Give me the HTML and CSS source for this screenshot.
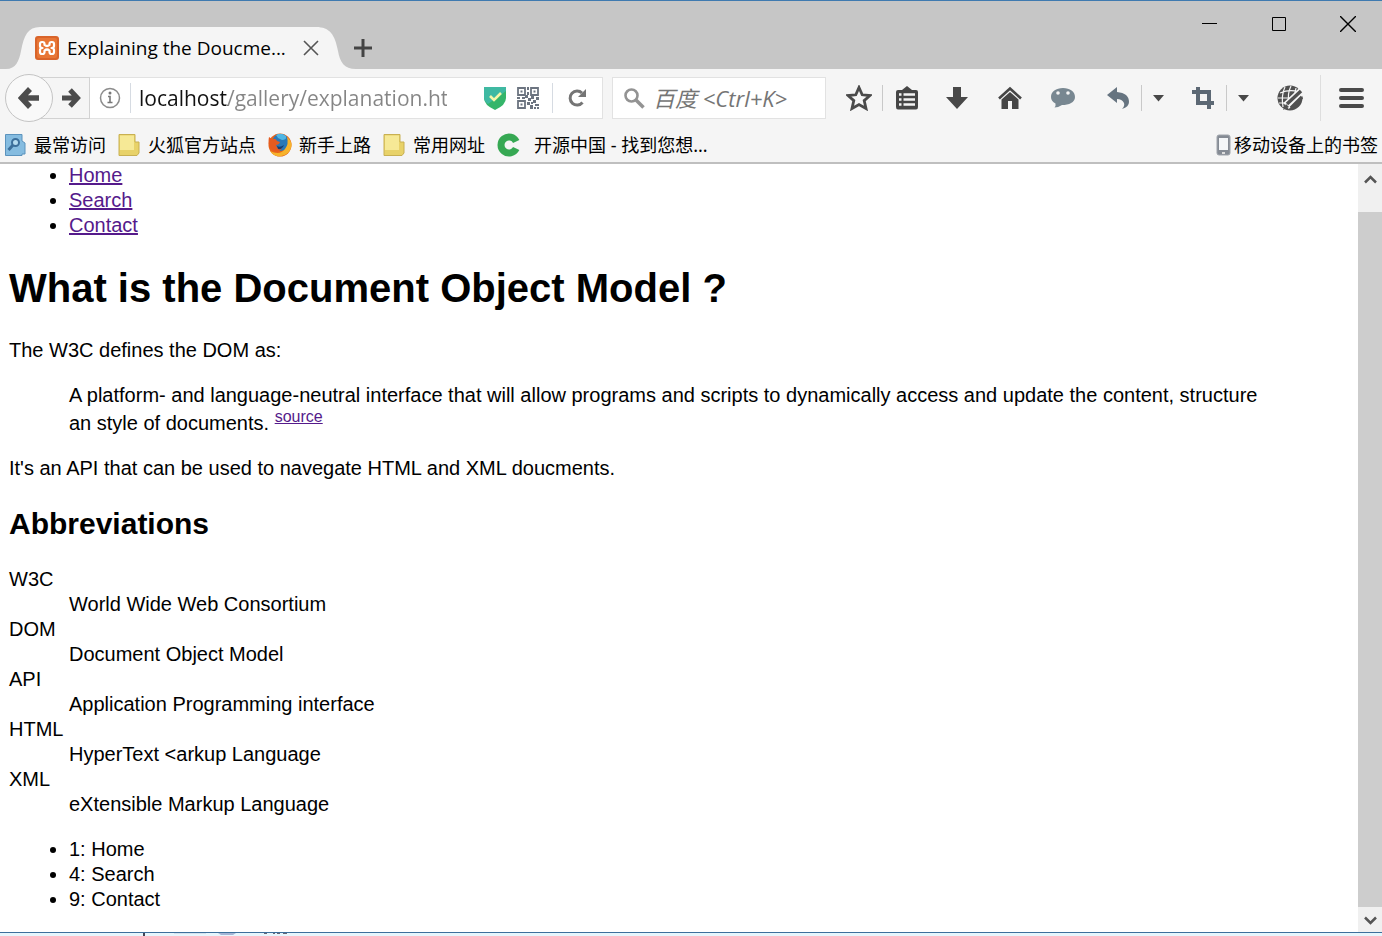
FILE: index.html
```
<!DOCTYPE html>
<html lang="en">
<head>
    <meta charset="UTF-8">
    <meta name="viewport" content="width=device-width, initial-scale=1.0">
    <title>Explaining the Document Object Model</title>
    <link rel="stylesheet" href="styles.css">
</head>
<body>
    <header class="titlebar">
        <div class="tab">
            <svg class="tab-shape" width="360" height="42" viewBox="0 0 360 42"><path d="M0 42H6C16 42 19 34 21 24C24 8 28 0 40 0H316C330 0 335 8 338 24C340 35 344 42 356 42H360Z" fill="#f5f5f5"/></svg>
            <svg class="tab-icon" width="24" height="24" viewBox="0 0 24 24">
                <rect width="24" height="24" rx="3" fill="#d9642a"/>
                <rect x="2" y="2" width="20" height="20" rx="2" fill="#e87636"/>
                <path d="M9.500 9V8Q9.500 6 7.500 6H7Q5 6 5 8V10Q5 12 7.500 12Q5 12 5 14V16Q5 18 7 18H7.500Q9.500 18 9.500 16V14.500Q12 12.500 14.500 14.500V16Q14.500 18 16.500 18H17Q19 18 19 16V14Q19 12 16.500 12Q19 12 19 10V8Q19 6 17 6H16.500Q14.500 6 14.500 8V9Q12 11 9.500 9Z" fill="none" stroke="#fff" stroke-width="2.200" stroke-linejoin="round"/>
            </svg>
            <span class="tab-title">Explaining the Doucme...</span>
            <button class="tab-close" aria-label="Close tab"><svg width="18" height="18" viewBox="0 0 18 18"><path d="M2 2L16 16M16 2L2 16" stroke="#555" stroke-width="1.600"/></svg></button>
        </div>
        <button class="new-tab" aria-label="New tab"><svg width="18" height="18" viewBox="0 0 18 18"><path d="M9 0V18M0 9H18" stroke="#444" stroke-width="3"/></svg></button>
        <div class="window-buttons">
            <button aria-label="Minimize"><svg width="16" height="16" viewBox="0 0 16 16"><path d="M0 7.500H15" stroke="#000"/></svg></button>
            <button aria-label="Maximize"><svg width="16" height="16" viewBox="0 0 16 16"><path d="M1.500 1.500H14.500V14.500H1.500Z" fill="none" stroke="#000"/></svg></button>
            <button aria-label="Close"><svg width="16" height="16" viewBox="0 0 16 16"><path d="M0 0L16 16M16 0L0 16" stroke="#000" stroke-width="1.400"/></svg></button>
        </div>
    </header>

    <nav class="toolbar">
        <button class="back" aria-label="Back"><svg width="22" height="24" viewBox="0 0 22 24"><path d="M12 3L3.500 12L12 21M4 12H21" fill="none" stroke="#4c4c4c" stroke-width="5.500"/></svg></button>
        <button class="forward" aria-label="Forward"><svg width="20" height="22" viewBox="0 0 20 22"><path d="M9 3L16.500 11L9 19M16 11H1" fill="none" stroke="#4c4c4c" stroke-width="5"/></svg></button>
        <div class="urlbar">
            <svg class="info" width="22" height="22" viewBox="0 0 22 22"><circle cx="11" cy="11" r="9.500" fill="none" stroke="#8c8c8c" stroke-width="1.500"/><circle cx="11" cy="6" r="1.500" fill="#777"/><path d="M9 9.500H11V15.500M8.500 15.500H13.500" fill="none" stroke="#777" stroke-width="1.600"/></svg>
            <span class="sep"></span>
            <input class="url" type="text" aria-label="Address" value="localhost/gallery/explanation.html">
            <svg width="22" height="24" viewBox="0 0 22 24"><path d="M0 1H22V12Q22 19 11 24Q0 19 0 12Z" fill="#35b56a"/><path d="M0 1H22V5L4 18Q0 15 0 12Z" fill="#3fb9a2"/><path d="M6 10L10 14L17 7" fill="none" stroke="#f7f7a8" stroke-width="2.600"/></svg>
            <svg width="22" height="22" viewBox="0 0 22 22">
                <path d="M1 1H8V8H1ZM14 1H21V8H14ZM1 14H8V21H1Z" fill="none" stroke="#6c7480" stroke-width="1.800"/>
                <path d="M3.500 3.500H5.500V5.500H3.500ZM16.500 3.500H18.500V5.500H16.500ZM3.500 16.500H5.500V18.500H3.500ZM10 0H12V3H10ZM10 5H12V8H10ZM0 10H3V12H0ZM5 10H8V12H5ZM8 8H11V11H8ZM11 11H14V14H11ZM14 9H17V12H14ZM19 10H22V13H19ZM16 13H19V16H16ZM10 15H13V18H10ZM13 18H16V22H13ZM14 15H16V17H14ZM18 17H22V19H18ZM17 20H19V22H17ZM20 20H22V22H20Z" fill="#6c7480"/>
            </svg>
            <span class="sep"></span>
            <button class="reload" aria-label="Reload"><svg width="20" height="20" viewBox="0 0 20 20"><path d="M14.500 14.500A7 7 0 1 1 14 5" fill="none" stroke="#757575" stroke-width="3"/><path d="M18 1V9H10Z" fill="#757575"/></svg></button>
        </div>
        <label class="search">
            <svg width="21" height="21" viewBox="0 0 21 21"><circle cx="7.500" cy="7.500" r="6" fill="none" stroke="#939393" stroke-width="2.600"/><path d="M12 12L19.500 19.500" stroke="#939393" stroke-width="3.500"/></svg>
            <input type="text" aria-label="Search" placeholder="百度 &lt;Ctrl+K&gt;">
        </label>
        <div class="tools">
            <button class="tool narrow" aria-label="Bookmark"><svg width="26" height="26" viewBox="0 0 26 26"><path d="M13 2.500L16.200 9.800L24 10.500L18.200 15.600L20 23.500L13 19.500L6 23.500L7.800 15.600L2 10.500L9.800 9.800Z" fill="none" stroke="#4a4a4a" stroke-width="2.800"/></svg></button>
            <span class="sep"></span>
            <button class="tool narrow" aria-label="Show bookmarks"><svg width="24" height="24" viewBox="0 0 24 24"><path d="M3 4H7L12 0L17 4H21Q23 4 23 6V21Q23 23.500 21 23.500H3Q1 23.500 1 21V6Q1 4 3 4Z" fill="#464646"/><path d="M4 8.500H6.500M8.500 8.500H20M4 13.500H6.500M8.500 13.500H20M4 18.500H6.500M8.500 18.500H20" stroke="#f5f5f5" stroke-width="2.600"/></svg></button>
            <button class="tool" aria-label="Downloads"><svg width="22" height="22" viewBox="0 0 22 22"><path d="M7 0H15V10H22L11 22L0 10H7Z" fill="#484848"/></svg></button>
            <button class="tool" aria-label="Home"><svg width="24" height="24" viewBox="0 0 24 24"><path d="M1 12.500L12 2.500L23 12.500" fill="none" stroke="#464646" stroke-width="2.600"/><path d="M3.500 13.500L12 6L20.500 13.500V23H14V15H10V23H3.500Z" fill="#464646"/></svg></button>
            <button class="tool" aria-label="Chat"><svg width="24" height="22" viewBox="0 0 24 22"><path d="M12 1C19 1 24 4.500 24 10S18 18 11 18Q7 20.500 3.500 20.500Q5 18.500 4.500 16.500Q0 14 0 10C0 4.500 5 1 12 1Z" fill="#788791"/><circle cx="7" cy="6" r="1.800" fill="#f5f5f5"/><circle cx="17" cy="6" r="1.800" fill="#f5f5f5"/></svg></button>
            <button class="tool split" aria-label="Undo"><svg width="22" height="22" viewBox="0 0 22 22"><path d="M0 8L10 0V5Q22 6 22 15Q22 20 15 22Q18 19 17 16Q15 12 10 12V16Z" fill="#667480"/></svg></button>
            <span class="sep"></span>
            <button class="caret" aria-label="Undo options"><svg width="11" height="7" viewBox="0 0 11 7"><path d="M0 0H11L5.500 6.500Z" fill="#484848"/></svg></button>
            <button class="tool split" aria-label="Crop"><svg width="22" height="22" viewBox="0 0 22 22"><path d="M6 0V16H22M0 5H17V22" fill="none" stroke="#5c6874" stroke-width="4"/></svg></button>
            <span class="sep"></span>
            <button class="caret" aria-label="Crop options"><svg width="11" height="7" viewBox="0 0 11 7"><path d="M0 0H11L5.500 6.500Z" fill="#484848"/></svg></button>
            <button class="tool wide" aria-label="Web tools"><svg width="26" height="26" viewBox="0 0 26 26"><circle cx="13" cy="13" r="12.500" fill="#505050"/><path d="M3 8Q13 4 22 7M1 13H18M2 18H13M8 2Q4 10 6 22M14 1Q10 9 12 18M19 3Q18 8 17 12" fill="none" stroke="#f5f5f5" stroke-width="1.200"/><path d="M9 21L25 6" stroke="#f5f5f5" stroke-width="8"/><path d="M10 19L24 6M14 23L25 12" stroke="#505050" stroke-width="3.500"/><path d="M6 25L9 19L12 22Z" fill="#505050"/></svg></button>
            <span class="sep tall"></span>
            <button class="tool wide" aria-label="Menu"><svg width="25" height="20" viewBox="0 0 25 20"><path d="M2 2H23M2 10H23M2 18H23" stroke="#4a4a4a" stroke-width="4" stroke-linecap="round"/></svg></button>
        </div>
    </nav>

    <nav class="bookmarks">
        <a href="#"><svg width="23" height="24" viewBox="0 0 23 24"><path d="M1.500 1.500H18V8L21 10V21H18V22.500H1.500Z" fill="#85bce0" stroke="#5b93bd"/><circle cx="11.500" cy="9.500" r="3.500" fill="#b4dbf0" stroke="#3c6f9b" stroke-width="2"/><path d="M9 12L4.500 17" stroke="#3c6f9b" stroke-width="3"/></svg>最常访问</a>
        <a href="#"><svg width="23" height="24" viewBox="0 0 23 24"><path d="M1 1.500H17V9H21V20L19 22.500H1Z" fill="#e8d269" stroke="#c8b052"/><path d="M2 2.500H16V17H2Z" fill="#f6e996"/></svg>火狐官方站点</a>
        <a href="#"><svg width="24" height="24" viewBox="0 0 24 24"><circle cx="12" cy="12" r="11.500" fill="#e8641b"/><circle cx="12.500" cy="9.500" r="8.500" fill="#2979b8"/><path d="M8 2Q13 -1 18 3Q19 7 14 7L10 5Z" fill="#4fb6e3"/><path d="M19 4Q24 8 23.500 13Q22 22 12 23.500Q5 23 2 18Q12 23 17 16Q21 11 19 4Z" fill="#f6b32b"/><path d="M1 4L4 6Q8 5 9 8L12 9Q11 12 8 12Q9 16 14 15Q11 20 6 18Q-1 14 1 4Z" fill="#e55b20"/><path d="M9 13Q12 15 16 12Q14 17 10 16Z" fill="#193d70"/></svg>新手上路</a>
        <a href="#"><svg width="23" height="24" viewBox="0 0 23 24"><path d="M1 1.500H17V9H21V20L19 22.500H1Z" fill="#e8d269" stroke="#c8b052"/><path d="M2 2.500H16V17H2Z" fill="#f6e996"/></svg>常用网址</a>
        <a class="oschina" href="#"><svg width="23" height="24" viewBox="0 0 23 24"><path d="M19.200 8.500A8 8 0 1 0 19.200 15.500" fill="none" stroke="#36a853" stroke-width="7"/></svg>开源中国 - 找到您想...</a>
        <a class="mobile" href="#"><svg width="15" height="22" viewBox="0 0 15 22"><rect x="1" y="1" width="13" height="20" rx="2" fill="#858b94" stroke="#a0a5ac"/><path d="M3 4H12V16H3Z" fill="#f4f6f8"/><path d="M6 19H9" stroke="#ddd" stroke-width="2"/></svg>移动设备上的书签</a>
    </nav>

    <div class="viewport">
        <main class="page">
            <ul>
                <li><a href="#">Home</a></li>
                <li><a href="#">Search</a></li>
                <li><a href="#">Contact</a></li>
            </ul>
            <h1>What is the Document Object Model ?</h1>
            <p>The W3C defines the DOM as:</p>
            <blockquote>
                A platform- and language-neutral interface that will allow programs and scripts to dynamically access and update the content, structure an style of documents. <sup><a href="#">source</a></sup>
            </blockquote>
            <p>It's an API that can be used to navegate HTML and XML doucments.</p>
            <h2>Abbreviations</h2>
            <dl>
                <dt>W3C</dt>
                <dd>World Wide Web Consortium</dd>
                <dt>DOM</dt>
                <dd>Document Object Model</dd>
                <dt>API</dt>
                <dd>Application Programming interface</dd>
                <dt>HTML</dt>
                <dd>HyperText &lt;arkup Language</dd>
                <dt>XML</dt>
                <dd>eXtensible Markup Language</dd>
            </dl>
            <ul>
                <li>1: Home</li>
                <li>4: Search</li>
                <li>9: Contact</li>
            </ul>
        </main>
        <div class="scrollbar">
            <svg class="up" width="24" height="30" viewBox="0 0 24 30"><path d="M7 18.500L12.500 13L18 18.500" fill="none" stroke="#555" stroke-width="2.500"/></svg>
            <div class="thumb"></div>
            <svg width="24" height="25" viewBox="0 0 24 25"><path d="M7 10.500L12.500 16L18 10.500" fill="none" stroke="#555" stroke-width="2.500"/></svg>
        </div>
    </div>
    <footer class="edge">
        <svg width="300" height="3" viewBox="0 0 300 3"><path d="M143 0H145V3H143Z" fill="#445"/><path d="M174 0H206V1H174Z" fill="#d3e3ef"/><path d="M218 0H236L233 2H221Z" fill="#a5b5d5"/><path d="M264 0H267V1H264ZM273 0H275V1H273ZM277 0H280V1H277ZM283 0H287V1H283Z" fill="#667"/></svg>
    </footer>
</body>
</html>
```

FILE: styles.css
```
* {
    box-sizing: border-box;
}

body {
    margin: 0;
    height: 100vh;
    display: flex;
    flex-direction: column;
    overflow: hidden;
    background: #fff;
    font-family: "Noto Sans", "Noto Sans CJK SC", sans-serif;
}

button {
    border: none;
    background: none;
    padding: 0;
    display: flex;
    align-items: center;
    justify-content: center;
}

input {
    border: none;
    outline: none;
    padding: 0;
    min-width: 0;
    background: none;
}

svg {
    flex: none;
}

/* title bar */
.titlebar {
    flex: none;
    display: flex;
    align-items: flex-end;
    height: 69px;
    background: #c6c6c6;
    border-top: 1px solid #3f7ab0;
}

.tab {
    position: relative;
    display: flex;
    align-items: center;
    width: 350px;
    height: 42px;
    padding-left: 35px;
}

.tab-shape {
    position: absolute;
    left: 0;
    top: 0;
}

.tab-icon,
.tab-title,
.tab-close {
    position: relative;
}

.tab-title {
    width: 226px;
    margin-left: 8px;
    font-family: "Open Sans", sans-serif;
    font-size: 19px;
    white-space: nowrap;
}

.tab-close {
    margin-left: 9px;
}

.new-tab {
    height: 42px;
    margin-left: 4px;
}

.window-buttons {
    display: flex;
    align-self: flex-start;
    margin-left: auto;
}

.window-buttons button {
    width: 69px;
    height: 46px;
}

/* navigation */
.toolbar {
    flex: none;
    display: flex;
    align-items: center;
    height: 58px;
    padding-left: 5px;
    background: #f5f5f5;
}

.back {
    position: relative;
    width: 48px;
    height: 48px;
    border: 1px solid #c4c4c4;
    border-radius: 50%;
    background: #f9f9f9;
}

.forward {
    width: 49px;
    height: 42px;
    margin-left: -12px;
    padding-left: 10px;
    border: 1px solid #d2d2d2;
}

.urlbar {
    flex: 1;
    min-width: 0;
    display: flex;
    align-items: center;
    height: 42px;
    padding-left: 9px;
    background: #fff;
    border: 1px solid #e2e2e2;
    border-left: none;
}

.urlbar svg + svg {
    margin-left: 11px;
}

.sep {
    flex: none;
    width: 1px;
    height: 26px;
    background: #c9c9c9;
}

.urlbar .sep {
    height: 30px;
    margin-left: 9px;
    background: #d6dbe2;
}

.url {
    flex: 1;
    height: 36px;
    margin: 0 37px 0 8px;
    font-family: "Open Sans", sans-serif;
    font-size: 21px;
    color: transparent;
    background: linear-gradient(to right, #111 89px, #858585 89px);
    -webkit-background-clip: text;
    background-clip: text;
}

.urlbar .sep:nth-last-child(2) {
    margin-left: 13px;
}

.reload {
    width: 49px;
    height: 40px;
}

.search {
    display: flex;
    align-items: center;
    width: 214px;
    height: 42px;
    margin-left: 9px;
    padding-left: 11px;
    background: #fff;
    border: 1px solid #e2e2e2;
}

.search input {
    flex: 1;
    margin-left: 8px;
    font-family: "Open Sans", "Noto Sans CJK SC", sans-serif;
    font-size: 22px;
    font-style: italic;
}

.search input::placeholder {
    color: #757575;
}

.tools {
    flex: none;
    display: flex;
    align-items: center;
    margin-left: 9px;
}

.tool {
    width: 53px;
    height: 42px;
}

.tool.narrow {
    width: 47px;
}

.tool.split {
    width: 46px;
    margin-left: 6px;
}

.tool.wide {
    width: 61px;
}

.caret {
    width: 32px;
    height: 42px;
}

.sep.tall {
    height: 46px;
    background: #dedede;
}

/* bookmarks bar */
.bookmarks {
    flex: none;
    display: flex;
    align-items: center;
    gap: 12px;
    height: 37px;
    padding: 0 4px;
    background: #f5f5f5;
    border-bottom: 2px solid #bfbfbf;
}

.bookmarks a {
    display: flex;
    align-items: center;
    gap: 7px;
    font-size: 18px;
    line-height: 24px;
    color: #000;
    text-decoration: none;
    white-space: nowrap;
}

.bookmarks .oschina {
    gap: 14px;
}

.bookmarks .mobile {
    gap: 3px;
    margin-left: auto;
}

/* document */
.viewport {
    flex: 1;
    min-height: 0;
    display: flex;
}

.page {
    flex: 1;
    padding: 0 9px;
    overflow: hidden;
    font-family: "Liberation Sans", Arial, sans-serif;
    font-size: 20px;
    line-height: 25px;
    color: #000;
}

.page a {
    color: #551a8b;
}

.page ul {
    margin: 0;
    padding-left: 60px;
}

/* the page is scrolled slightly past its top */
.page ul:first-child {
    margin-top: -1px;
}

.page h1 {
    margin: 27px 0;
    font-size: 40px;
    line-height: 46px;
}

.page h2 {
    margin: 25px 0;
    font-size: 30px;
    line-height: 36px;
}

.page p {
    margin: 20px 0;
}

.page blockquote {
    margin: 20px 70px 20px 60px;
}

.page sup {
    font-size: 16px;
    line-height: 17px;
}

.page dl {
    margin: 20px 0;
}

.page dd {
    margin-left: 60px;
}

.scrollbar {
    flex: none;
    display: flex;
    flex-direction: column;
    width: 24px;
    background: #f0f0f0;
}

.scrollbar .up {
    margin-bottom: 18px;
}

.thumb {
    flex: 1;
    background: #cdcdcd;
}

.edge {
    flex: none;
    height: 4px;
    border-top: 1px solid #3d6f9c;
    background: #e6f6fd;
}

.edge svg {
    display: block;
}
```
